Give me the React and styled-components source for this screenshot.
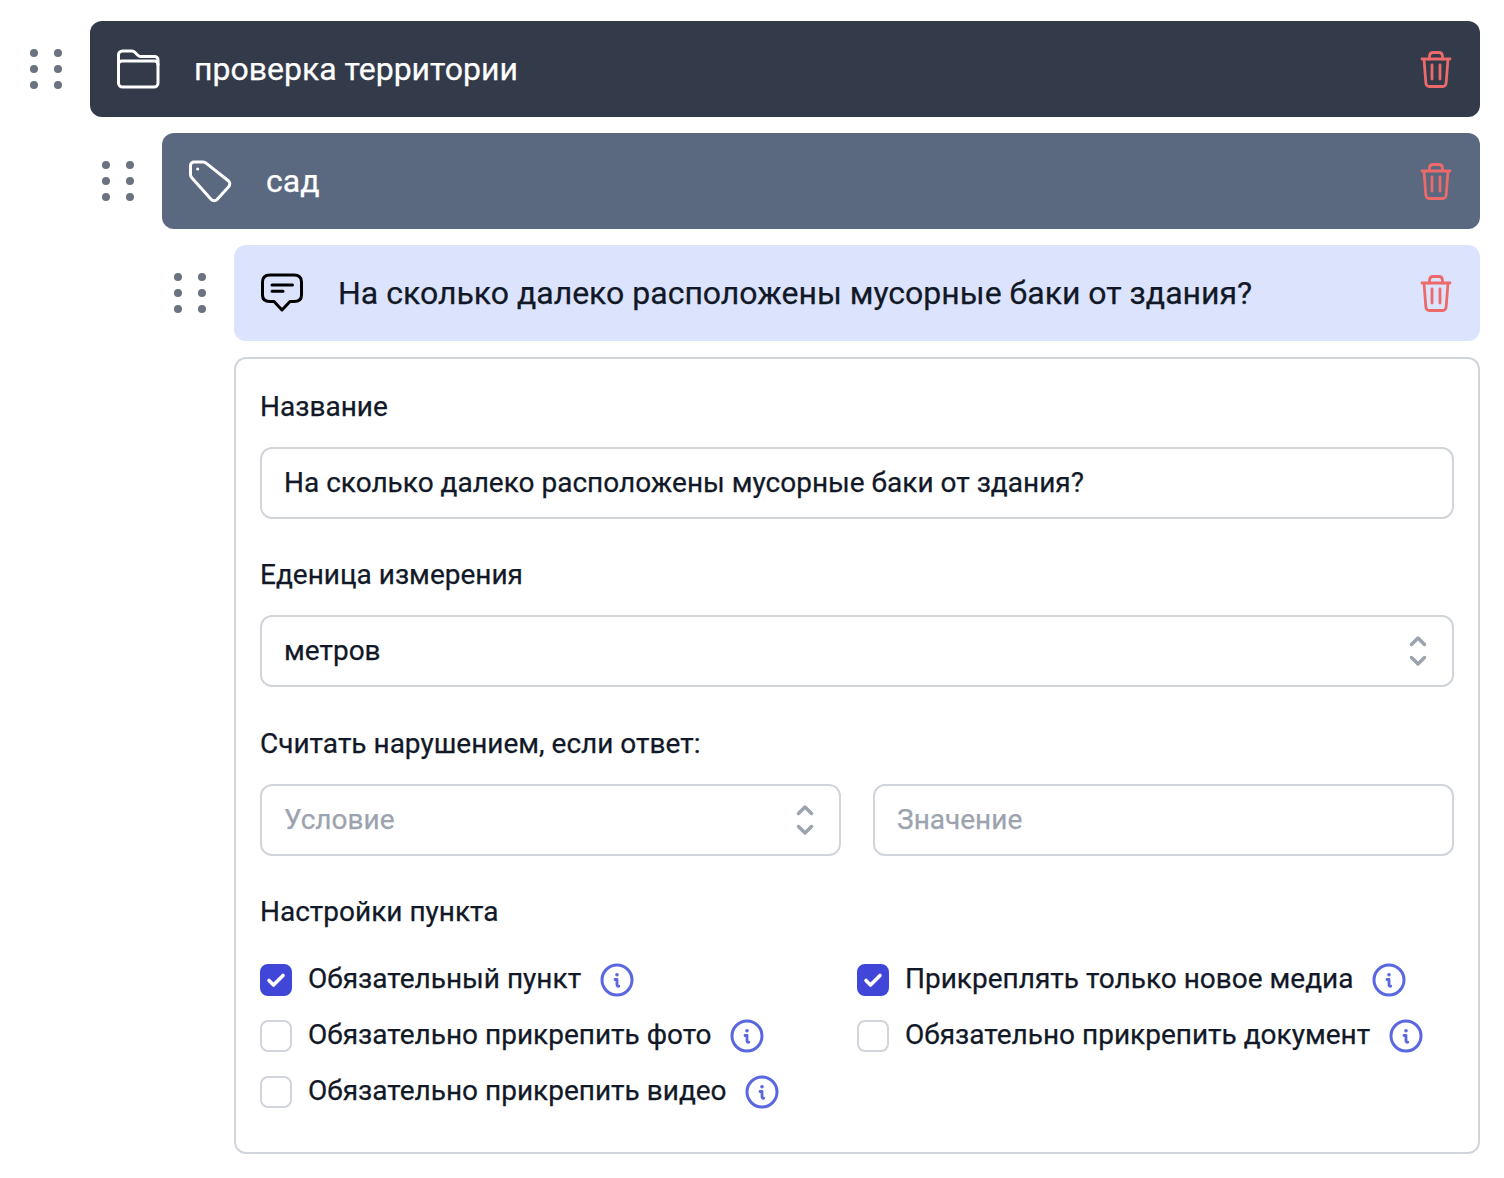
import React from "react";
import styled, { createGlobalStyle } from "styled-components";

const Global = createGlobalStyle`
  html, body { margin: 0; padding: 0; background: #fff; }
  body { font-family: Roboto, "Noto Sans", sans-serif; color: #111827; -webkit-text-stroke: 0.25px currentColor; }
  * { box-sizing: border-box; }
`;
const Page = styled.div`
  width: 1504px; height: 1178px; padding: 21px 24px 0 0;
  display: flex; flex-direction: column; gap: 16px;
`;
const Row = styled.div`
  display: flex; align-items: stretch; margin-left: ${p => p.$indent * 72}px;
`;
const Handle = styled.div`
  width: 90px; flex: none; padding: 20px 0 0 22px; color: #6b7280;
  svg { display: block; }
`;
const Card = styled.div`
  flex: 1; height: 96px; border-radius: 12px; display: flex; align-items: center;
  padding: 0 20px 0 24px; gap: 32px;
  background: ${p => p.$bg}; color: ${p => p.$fg};
`;
const Title = styled.div`
  flex: 1; font-size: 32px; line-height: 40px; font-weight: 400;
`;
const Panel = styled.div`
  margin-left: 234px; height: 797px; border: 2px solid #d1d5db; border-radius: 12px;
  padding: 28px 24px 0; display: flex; flex-direction: column;
`;
const Label = styled.div`
  font-size: 28px; line-height: 40px; font-weight: 400; color: #111827;
`;
const Field = styled.div`
  height: 72px; border: 2px solid #d1d5db; border-radius: 12px; background: #fff;
  display: flex; align-items: center; justify-content: space-between; padding: 0 22px 2px;
  font-size: 28px; color: ${p => (p.$placeholder ? "#9ca3af" : "#111827")};
  margin-top: 20px; flex: ${p => (p.$half ? "1" : "none")};
`;
const Section = styled.div`
  margin-top: ${p => p.$top}px;
`;
const TwoCols = styled.div`
  display: flex; gap: 32px;
`;
const OptionGrid = styled.div`
  display: grid; grid-template-columns: 597px 1fr; row-gap: 24px; margin-top: 32px;
`;
const Option = styled.div`
  display: flex; align-items: center; height: 32px; font-size: 28px; line-height: 30px; color: #111827;
`;
const OptionText = styled.span`
  display: block; margin-top: -2px;
`;
const Box = styled.span`
  width: 32px; height: 32px; border-radius: 8px; flex: none; margin-right: 16px;
  display: flex; align-items: center; justify-content: center;
  background: ${p => (p.$on ? "#4046d8" : "#fff")};
  border: 2px solid ${p => (p.$on ? "#4046d8" : "#d1d5db")};
`;
const InfoIcon = styled.svg`
  width: 36px; height: 36px; margin-left: 17.5px; flex: none; color: #5a67e0;
`;
const Btn = styled.div`
  width: 48px; height: 48px; flex: none; color: #ec6a6a;
  display: flex; align-items: center; justify-content: center;
`;
const ChevronIcon = styled.svg`
  flex: none; margin-right: -4px; margin-top: 2px;
`;
const ChatIcon = styled.svg`
  flex: none; color: #000;
`;

const Dots = () => (
  <svg width="48" height="64" viewBox="0 0 48 64" fill="currentColor">
    {[12, 28, 44].map(y => [12, 36].map(x => <circle key={x + "-" + y} cx={x} cy={y} r="4" />))}
  </svg>
);
const Folder = () => (
  <svg width="48" height="48" viewBox="0 0 48 48" fill="none" stroke="currentColor" strokeWidth="3" strokeLinecap="round" strokeLinejoin="round">
    <path d="M4.500 23V10c0-2.200 1.800-4 4-4h9.500c1 0 2 .4 2.800 1.200l3 3c.8.800 1.800 1.200 2.800 1.200H40.500c2 0 3.500 1.500 3.500 3.500V38c0 2.200-1.800 4-4 4H8.500c-2.200 0-4-1.800-4-4z" />
    <path d="M4.500 19.500c0-1.900 1.600-3.500 3.500-3.500H40.500c2 0 3.500 1.500 3.500 3.500" />
  </svg>
);
const Tag = () => (
  <svg width="48" height="48" viewBox="0 0 48 48" fill="none" stroke="currentColor" strokeWidth="3" strokeLinecap="round" strokeLinejoin="round">
    <path d="M8 5h9c1.300 0 2.500.5 3.400 1.400L42.600 24c1.600 1.600 1.600 4.100.1 5.700L31 42.500c-1.600 1.600-4.200 1.600-5.700 0L6 21c-1-1-1.500-2.200-1.500-3.500V8.500C4.500 6.500 6 5 8 5z" />
    <circle cx="11.700" cy="12" r="1.500" fill="currentColor" stroke="none" />
  </svg>
);
const Chat = () => (
  <ChatIcon width="48" height="48" viewBox="0 0 48 48" fill="none" stroke="currentColor" strokeWidth="3" strokeLinecap="round" strokeLinejoin="round">
    <path d="M12 6h24c5 0 7.500 2.500 7.500 7v13c0 4.500-2.500 6.500-7.500 6.500h-4l-8 8.500-8-8.500h-4c-5 0-7.500-2-7.500-6.500V13c0-4.500 2.500-7 7.500-7z" />
    <path d="M14 16h20.500M14 22.300h11" />
  </ChatIcon>
);
const Trash = () => (
  <svg width="48" height="48" viewBox="0 0 48 48" fill="none" stroke="currentColor" strokeWidth="2.800" strokeLinecap="round" strokeLinejoin="round">
    <path d="M10 14h28M12 14l1.800 23.500c.2 2.500 1.700 4 3.700 4h13c2 0 3.500-1.500 3.700-4L36 14" />
    <path d="M17.500 14v-2.500c0-2.400 1.500-4 3.800-4h5.400c2.300 0 3.800 1.600 3.800 4V14M20 20v14M28 20v14" />
  </svg>
);
const Updown = () => (
  <ChevronIcon width="32" height="40" viewBox="0 0 32 40" fill="none" stroke="#9ca3af" strokeWidth="3.500" strokeLinecap="round" strokeLinejoin="round">
    <path d="M9.500 13.500L16 7l6.500 6.500M9.500 26.500L16 33l6.500-6.500" />
  </ChevronIcon>
);
const Info = () => (
  <InfoIcon viewBox="0 0 36 36" fill="none" stroke="currentColor" strokeWidth="3" strokeLinecap="round" strokeLinejoin="round">
    <circle cx="18" cy="18" r="15" />
    <path d="M16 17.500h2v5.500c0 1 .8 1.500 1.800 1.200" strokeWidth="2.800" />
    <circle cx="18" cy="12.800" r="1.800" fill="currentColor" stroke="none" />
  </InfoIcon>
);
const Check = () => (
  <svg width="20" height="20" viewBox="0 0 20 20" fill="none" stroke="#fff" strokeWidth="3.600" strokeLinecap="round" strokeLinejoin="round">
    <path d="M3 10.500l4.500 4.500 9.500-9.500" />
  </svg>
);

const Node = ({ indent, bg, fg, icon, text }) => (
  <Row $indent={indent}>
    <Handle><Dots /></Handle>
    <Card $bg={bg} $fg={fg}>
      {icon}
      <Title>{text}</Title>
      <Btn><Trash /></Btn>
    </Card>
  </Row>
);
const Opt = ({ on, children }) => (
  <Option>
    <Box $on={on}>{on && <Check />}</Box>
    <OptionText>{children}</OptionText>
    <Info />
  </Option>
);

export default function App() {
  const q = "На сколько далеко расположены мусорные баки от здания?";
  return (
    <Page>
      <Global />
      <Node indent={0} bg="#333a4a" fg="#fff" icon={<Folder />} text="проверка территории" />
      <Node indent={1} bg="#5a697f" fg="#fff" icon={<Tag />} text="сад" />
      <Node indent={2} bg="#dce3fc" fg="#111827" icon={<Chat />} text={q} />
      <Panel>
        <Section $top={0}>
          <Label>Название</Label>
          <Field>{q}</Field>
        </Section>
        <Section $top={36}>
          <Label>Еденица измерения</Label>
          <Field>метров<Updown /></Field>
        </Section>
        <Section $top={37}>
          <Label>Считать нарушением, если ответ:</Label>
          <TwoCols>
            <Field $half $placeholder>Условие<Updown /></Field>
            <Field $half $placeholder>Значение</Field>
          </TwoCols>
        </Section>
        <Section $top={36}>
          <Label>Настройки пункта</Label>
          <OptionGrid>
            <Opt on>Обязательный пункт</Opt>
            <Opt on>Прикреплять только новое медиа</Opt>
            <Opt>Обязательно прикрепить фото</Opt>
            <Opt>Обязательно прикрепить документ</Opt>
            <Opt>Обязательно прикрепить видео</Opt>
          </OptionGrid>
        </Section>
      </Panel>
    </Page>
  );
}
